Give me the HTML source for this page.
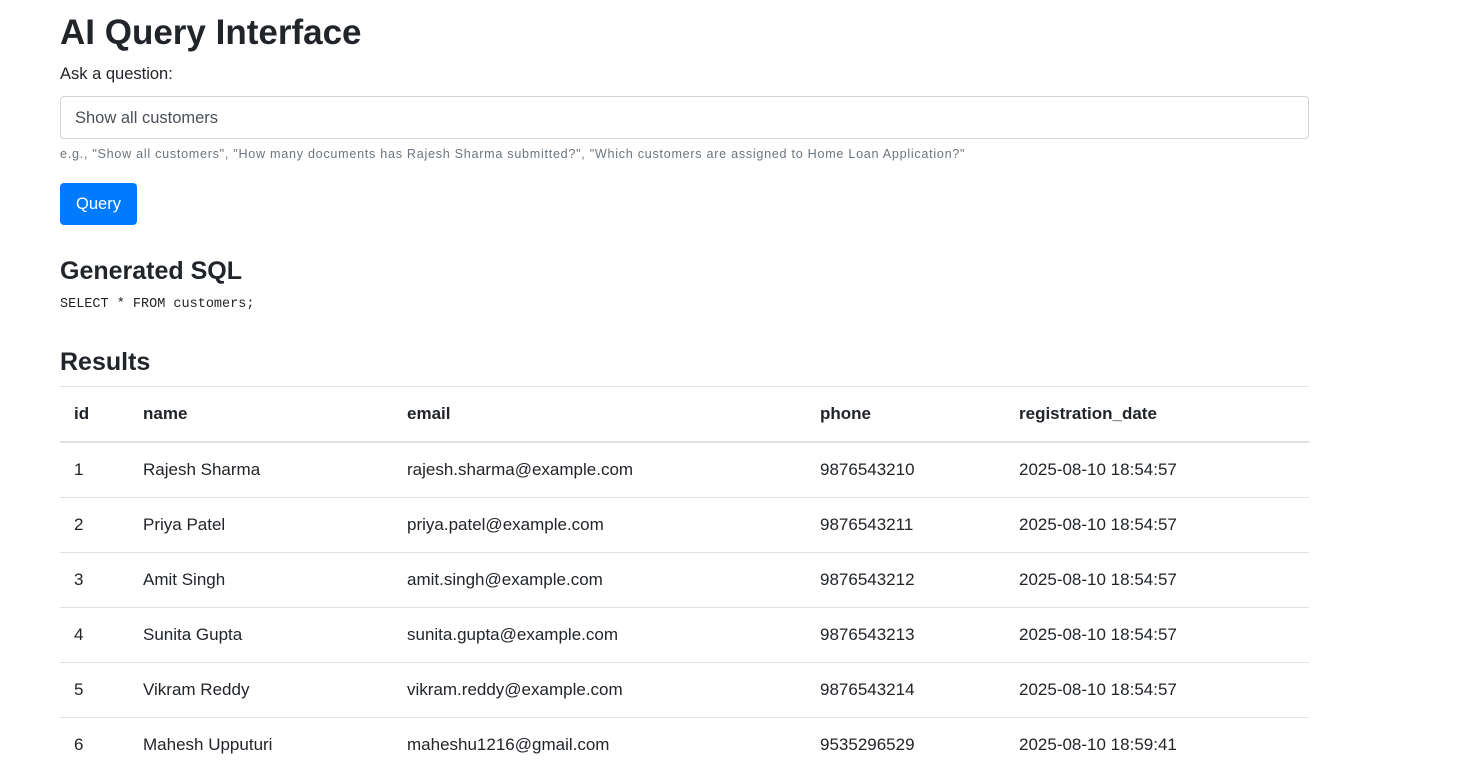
<!DOCTYPE html>
<html><head><style>
body{margin:0;font-family:"Liberation Sans",sans-serif;color:#212529;background:#fff;font-size:16px;}
h1{position:absolute;top:9px;left:60px;margin:0;font-size:35px;font-weight:bold;line-height:48px;}
.lab{position:absolute;top:62px;left:60px;line-height:24px;font-size:16.5px;}
.inp{position:absolute;top:96px;left:60px;width:1247px;height:41px;border:1px solid #ced4da;border-radius:4px;}
.inp span{position:absolute;left:14px;top:12px;color:#495057;font-size:16.5px;}
.small{position:absolute;top:146px;left:60px;font-size:12.6px;color:#6c757d;line-height:16px;letter-spacing:0.72px;}
.btn{position:absolute;top:183px;left:60px;width:77px;height:42px;background:#007bff;color:#fff;border-radius:4px;text-align:center;line-height:42px;font-size:16.5px;}
h3{position:absolute;margin:0;left:60px;font-size:25px;font-weight:bold;line-height:32px;}
pre{position:absolute;top:296px;left:60px;margin:0;font-family:"Liberation Mono",monospace;font-size:13.5px;line-height:18px;}
table{position:absolute;top:386px;left:60px;width:1249px;border-collapse:collapse;}
td,th{height:54px;padding:0 14px;border-top:1px solid #dee2e6;text-align:left;font-size:17px;}
th{border-bottom:2px solid #dee2e6;font-weight:bold;}
</style></head><body>
<h1>AI Query Interface</h1>
<div class="lab">Ask a question:</div>
<div class="inp"><span>Show all customers</span></div>
<div class="small">e.g., "Show all customers", "How many documents has Rajesh Sharma submitted?", "Which customers are assigned to Home Loan Application?"</div>
<div class="btn">Query</div>
<h3 style="top:255px">Generated SQL</h3>
<pre>SELECT * FROM customers;</pre>
<h3 style="top:346px">Results</h3>
<table>
<tr><th style="width:41px">id</th><th style="width:236px">name</th><th style="width:385px">email</th><th style="width:171px">phone</th><th>registration_date</th></tr>
<tr><td>1</td><td>Rajesh Sharma</td><td>rajesh.sharma@example.com</td><td>9876543210</td><td>2025-08-10 18:54:57</td></tr>
<tr><td>2</td><td>Priya Patel</td><td>priya.patel@example.com</td><td>9876543211</td><td>2025-08-10 18:54:57</td></tr>
<tr><td>3</td><td>Amit Singh</td><td>amit.singh@example.com</td><td>9876543212</td><td>2025-08-10 18:54:57</td></tr>
<tr><td>4</td><td>Sunita Gupta</td><td>sunita.gupta@example.com</td><td>9876543213</td><td>2025-08-10 18:54:57</td></tr>
<tr><td>5</td><td>Vikram Reddy</td><td>vikram.reddy@example.com</td><td>9876543214</td><td>2025-08-10 18:54:57</td></tr>
<tr><td>6</td><td>Mahesh Upputuri</td><td>maheshu1216@gmail.com</td><td>9535296529</td><td>2025-08-10 18:59:41</td></tr>
</table>
</body></html>
